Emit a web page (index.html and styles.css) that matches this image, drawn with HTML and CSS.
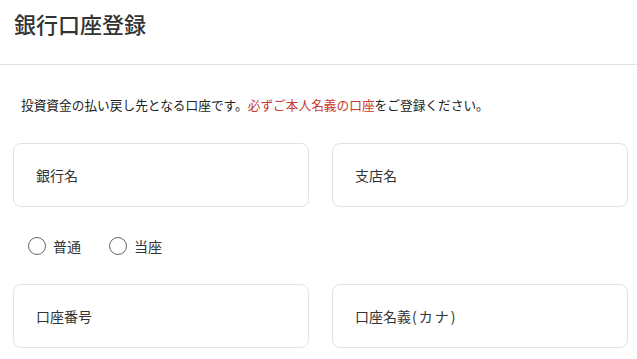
FILE: index.html
```html
<!DOCTYPE html>
<html lang="ja">
<head>
<meta charset="utf-8">
<title>銀行口座登録</title>
<link rel="stylesheet" href="styles.css">
</head>
<body>
<header class="page-header">
  <h1 class="page-title">銀行口座登録</h1>
</header>
<main class="content">
  <p class="notice">投資資金の払い戻し先となる口座です。<span class="notice-em">必ずご本人名義の口座</span>をご登録ください。</p>
  <div class="field-grid">
    <div class="field"><span class="field-label">銀行名</span></div>
    <div class="field"><span class="field-label">支店名</span></div>
  </div>
  <div class="radio-row">
    <label class="radio"><span class="radio-circle"></span><span class="radio-text">普通</span></label>
    <label class="radio"><span class="radio-circle"></span><span class="radio-text">当座</span></label>
  </div>
  <div class="field-grid">
    <div class="field"><span class="field-label">口座番号</span></div>
    <div class="field"><span class="field-label">口座名義<span class="paren">(カナ)</span></span></div>
  </div>
</main>
</body>
</html>
```
FILE: styles.css
```css
* { box-sizing: border-box; }
html, body { margin: 0; padding: 0; background: #fff; }
body {
  font-family: "Noto Sans CJK JP", "Noto Sans", sans-serif;
  color: #333;
}
.page-header {
  height: 65px;
  padding: 9px 14px 0;
  border-bottom: 1px solid #e3e3e3;
}
.page-title {
  margin: 0;
  font-size: 22px;
  line-height: 28px;
  font-weight: 500;
  color: #333;
}
.content {
  padding: 31px 9px 0 13px;
}
.notice {
  margin: 0 0 29px 8px;
  font-size: 12.7px;
  line-height: 18px;
  font-weight: 400;
  color: #222;
}
.notice-em { color: #c93a2e; }
.field-grid {
  display: grid;
  grid-template-columns: 296px 296px;
  column-gap: 23px;
}
.field {
  height: 64px;
  border: 1px solid #e2e2e2;
  border-radius: 8px;
  display: flex;
  align-items: center;
  padding: 0 0 0 22px;
}
.field-label {
  font-size: 14px;
  line-height: 20px;
  color: #333;
}
.paren {
  padding-left: 1px;
  letter-spacing: 2px;
}
.radio-row {
  display: flex;
  gap: 28px;
  height: 24px;
  margin: 27px 0 26px 15px;
  align-items: center;
}
.radio {
  display: flex;
  align-items: center;
  gap: 7px;
}
.radio-circle {
  width: 18px;
  height: 18px;
  border: 1px solid #666;
  border-radius: 50%;
  background: #fff;
}
.radio-text {
  font-size: 14px;
  line-height: 20px;
  font-weight: 400;
  color: #333;
}
```
